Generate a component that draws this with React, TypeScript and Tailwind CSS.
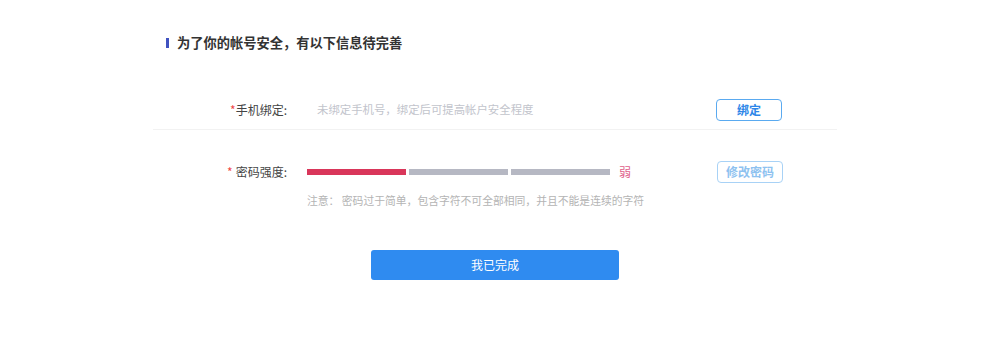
export default function App() {
  const bars = ['bg-[#d9365a]', 'bg-[#b6b8c3]', 'bg-[#b6b8c3]'];

  return (
    <div className="w-full h-[357px] bg-white font-['Noto_Sans_CJK_SC','Noto_Sans',sans-serif]">
      <div className="w-[684px] ml-[153px] pt-[34px]">
        {/* 标题 */}
        <div className="h-[18px] flex items-center pl-[13px]">
          <span className="w-[3px] h-[10px] bg-[#4052c0] mr-[8px]" />
          <h2 className="text-[13.25px] font-bold text-[#333]">为了你的帐号安全，有以下信息待完善</h2>
        </div>

        {/* 手机绑定 */}
        <div className="mt-[38px] h-[40px] flex items-center border-b border-[#f2f2f2]">
          <div className="w-[134px] text-right text-[12px] text-[#444]">
            <span className="text-[#f04848]">*</span>手机绑定:
          </div>
          <div className="ml-[30px] text-[11.4px] text-[#c2c4cc]">未绑定手机号，绑定后可提高帐户安全程度</div>
          <button className="ml-auto mr-[55px] w-[66px] h-[22px] rounded-[4px] border border-[#5aaaf0] text-[12px] font-bold text-[#2d86e8] bg-white">
            绑定
          </button>
        </div>

        {/* 密码强度 */}
        <div className="pt-[31px]">
          <div className="h-[22px] flex items-center">
            <div className="w-[134px] text-right text-[12px] text-[#444]">
              <span className="text-[#f04848] mr-[3px]">*</span>密码强度:
            </div>
            <div className="ml-[20px] flex items-center gap-[3px]">
              {bars.map((c, i) => (
                <span key={i} className={`w-[99px] h-[6px] ${c}`} />
              ))}
              <span className="ml-[6px] text-[12px] text-[#e0608a]">弱</span>
            </div>
            <button className="ml-auto mr-[54px] w-[66px] h-[22px] rounded-[4px] border border-[#a8d2f6] text-[12px] font-bold text-[#8ec2f0] bg-white">
              修改密码
            </button>
          </div>
          <p className="mt-[9px] ml-[154px] h-[16px] leading-[16px] text-[10.8px] text-[#b4b4b4]">
            注意： 密码过于简单，包含字符不可全部相同，并且不能是连续的字符
          </p>
        </div>

        {/* 完成 */}
        <button className="block mx-auto mt-[42px] w-[248px] h-[30px] rounded-[3px] bg-[#2f8bf0] text-[12px] text-white">
          我已完成
        </button>
      </div>
    </div>
  );
}
